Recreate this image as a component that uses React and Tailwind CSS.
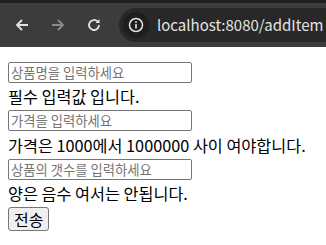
import { useState } from "react";

const FONT = {
  fontFamily: '"Noto Sans CJK KR", "Noto Sans", sans-serif',
};

function BrowserBar() {
  return (
    <div className="h-[47px] bg-[#3c3c3c] border-t-[3px] border-[#202124] flex items-center">
      <div className="flex items-center gap-[20px] pl-[14px] pr-[17px]">
        {/* back */}
        <svg width="16" height="16" viewBox="0 0 16 16">
          <path d="M14 8H3M8 3L3 8l5 5" stroke="#e3e3e3" strokeWidth="1.8" fill="none" />
        </svg>
        {/* forward */}
        <svg width="16" height="16" viewBox="0 0 16 16">
          <path d="M2 8h11M8 3l5 5-5 5" stroke="#8a8a8a" strokeWidth="1.8" fill="none" />
        </svg>
        {/* reload */}
        <svg width="16" height="16" viewBox="0 0 16 16">
          <path d="M13 8a5 5 0 1 1-1.5-3.6" stroke="#e3e3e3" strokeWidth="1.8" fill="none" />
          <path d="M13.5 2v4h-4z" fill="#e3e3e3" />
        </svg>
      </div>
      <div className="flex-1 h-[34px] bg-[#282828] rounded-l-full flex items-center pl-[4px]">
        <div className="w-[26px] h-[26px] rounded-full bg-[#1e1e1e] flex items-center justify-center">
          <svg width="16" height="16" viewBox="0 0 16 16">
            <circle cx="8" cy="8" r="6.5" stroke="#e3e3e3" strokeWidth="1.5" fill="none" />
            <rect x="7.2" y="7" width="1.6" height="4.5" fill="#e3e3e3" />
            <rect x="7.2" y="4.3" width="1.6" height="1.6" fill="#e3e3e3" />
          </svg>
        </div>
        <span
          className="ml-[8px] text-[15px] text-[#e3e3e3]"
          style={FONT}
        >
          localhost:8080/addItem
        </span>
      </div>
    </div>
  );
}

export default function App() {

  const [
    form,
    setForm,
  ] = useState({
    name: "",
    price: "",
    count: "",
  });

  const inputClass =
    "block w-[184px] h-[21px] border border-[#767676] rounded-[2px] px-[2px] text-[13.33px] text-black placeholder:text-[#757575] outline-none";

  return (

    <div className="w-[326px] h-[245px] bg-white overflow-hidden">

      <BrowserBar />

      <div className="px-2 pt-[15px] text-black" style={FONT}>

        <input
          className={inputClass}
          style={FONT}
          placeholder="상품명을 입력하세요"
          value={form.name}
          onChange={(e) =>
            setForm({ ...form, name: e.target.value })
          }
        />
        <div className="text-[16.25px] leading-[27px]">
          필수 입력값 입니다.
        </div>

        <input
          className={inputClass}
          style={FONT}
          placeholder="가격을 입력하세요"
          value={form.price}
          onChange={(e) =>
            setForm({ ...form, price: e.target.value })
          }
        />
        <div className="text-[16.25px] leading-[28px]">
          가격은 1000에서 1000000 사이 여야합니다.
        </div>

        <input
          className={inputClass}
          style={FONT}
          placeholder="상품의 갯수를 입력하세요"
          value={form.count}
          onChange={(e) =>
            setForm({ ...form, count: e.target.value })
          }
        />
        <div className="text-[16.25px] leading-[27px]">
          양은 음수 여서는 안됩니다.
        </div>

        <button
          className="h-[24px] px-[5px] bg-[#efefef] border border-[#767676] rounded-[3px] text-[16px] leading-none"
          style={FONT}
        >
          전송
        </button>

      </div>

    </div>
  );
}
